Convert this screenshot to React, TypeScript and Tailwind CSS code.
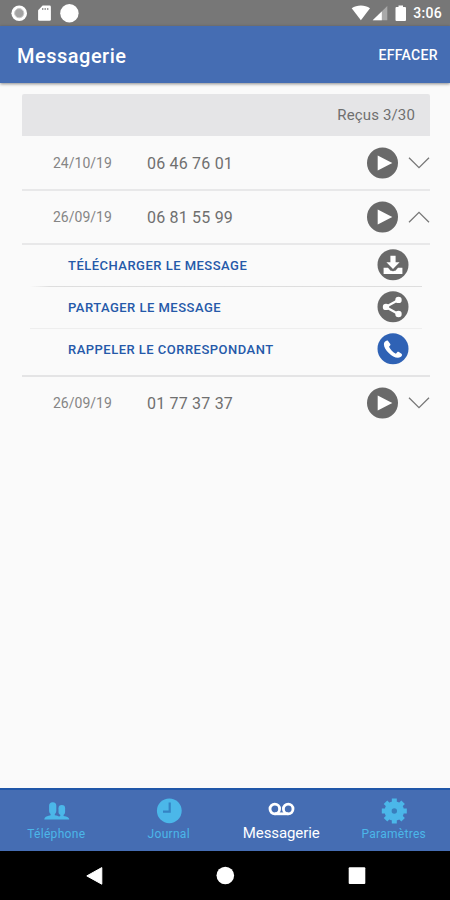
import React, { useState } from "react";

type Message = {
    id: number,
    date: string,
    phone: string,
}

const messages: Message[] = [
    {id: 1, date: "24/10/19", phone: "06 46 76 01"},
    {id: 2, date: "26/09/19", phone: "06 81 55 99"},
    {id: 3, date: "26/09/19", phone: "01 77 37 37"},
]

function StatusBar(){
    return(
        <div className="h-[26px] shrink-0 bg-[#777777]">
            <svg className="block" width="450" height="26" viewBox="0 0 450 26">
                <circle cx="19.2" cy="13.2" r="7.8" fill="#fff"/>
                <circle cx="19.2" cy="13.2" r="4.6" fill="#a3a3a3" stroke="#c9c9c9"/>
                <path d="M42.6 5.5h6.9a1.4 1.4 0 0 1 1.4 1.4v12.5a1.4 1.4 0 0 1-1.4 1.4h-10a1.4 1.4 0 0 1-1.4-1.4v-9.2z" fill="#fff"/>
                <path d="M42.7 8v2M45.2 8v2M47.7 8v2" stroke="#9a9a9a" strokeWidth="1.4"/>
                <circle cx="69.4" cy="13.2" r="9.2" fill="#fff"/>
                <path d="M351.7 8.2C356.8 4.6 364.9 4.6 370 8.2L360.9 20.2z" fill="#fff"/>
                <path d="M387.3 6v14.3h-14.6z" fill="#a9a9a9"/>
                <path d="M381.8 11.4v8.9h-9.1z" fill="#fff"/>
                <path d="M398.5 5.5h4.5v1.4h2a1 1 0 0 1 1 1v12a1 1 0 0 1-1 1h-8.5a1 1 0 0 1-1-1v-12a1 1 0 0 1 1-1h2z" fill="#fff"/>
                <text x="413.2" y="18.4" fill="#fff" fontSize="14" fontWeight="500" textLength="28.5">3:06</text>
            </svg>
        </div>
    )
}

function PlayButton(){
    return(
        <button className="block">
            <svg className="block" width="32" height="32" viewBox="0 0 32 32">
                <circle cx="16.5" cy="16" r="15.5" fill="#696969"/>
                <path d="M11.7 8.4v15.2l14.6-7.6z" fill="#fff"/>
            </svg>
        </button>
    )
}

function Chevron({open}: {open: boolean}){
    return(
        <svg className="block" width="22" height="14" viewBox="0 0 22 14" fill="none" stroke="#777777" strokeWidth="1.3">
            <path d={open ? "M1 12.3l10-10 10 10" : "M1 1.7l10 10 10-10"}/>
        </svg>
    )
}

function DownloadIcon(){
    return(
        <svg className="block" width="32" height="32" viewBox="0 0 32 32">
            <circle cx="16" cy="15.7" r="15.5" fill="#696969"/>
            <path d="M13.4 6.7h5.2v6.5h4l-6.6 6.8-6.6-6.8h4z" fill="#fff"/>
            <path d="M6.6 18.7h4.4l2.6 3h4.8l2.6-3h4.4v6.3h-18.8z" fill="#fff"/>
            <path d="M9.3 15.9l6.7 5.9 6.7-5.9" fill="none" stroke="#696969" strokeWidth="1.1"/>
        </svg>
    )
}

function ShareIcon(){
    return(
        <svg className="block" width="32" height="32" viewBox="0 0 32 32">
            <circle cx="16" cy="15.7" r="15.5" fill="#696969"/>
            <path d="M21.3 8.9l-12.6 7 12.6 7.2" fill="none" stroke="#fff" strokeWidth="2.3"/>
            <circle cx="21.5" cy="8.9" r="3.2" fill="#fff"/>
            <circle cx="9" cy="15.9" r="3.2" fill="#fff"/>
            <circle cx="21.5" cy="23" r="3.2" fill="#fff"/>
        </svg>
    )
}

function CallIcon(){
    return(
        <svg className="block" width="32" height="32" viewBox="0 0 32 32">
            <circle cx="16" cy="15.7" r="15.5" fill="#2f62b5"/>
            <path d="M9.5 7.700c-1.5.5-2.6 1.8-2.6 3.5 0 5.6 8.4 13.4 14 13.6 1.8 0 3.8-1.1 4.1-2.5.1-.7 0-1.1-.5-1.5l-2.6-1.7c-.6-.4-1.2-.4-1.7.1l-1.3 1.5c-3-1.3-5.6-4-6.9-6.9l1.1-1.2c.4-.5.5-1 .2-1.5l-2.2-3c-.4-.5-1-.6-1.6-.4z" fill="#fff"/>
        </svg>
    )
}

function MessageRow({message, open, toggle}: {message: Message, open: boolean, toggle: () => void}){
    return(
        <div className="h-[52px] flex flex-row items-center text-[#6f6f6f]">
            <span className="ml-[31px] w-[94px] pt-px text-[14px] text-[#858585]">{message.date}</span>
            <span className="pt-px text-[16px] tracking-[0.2px]">{message.phone}</span>
            <div className="ml-auto flex flex-row items-center gap-[10px]">
                <PlayButton/>
                <button onClick={toggle}><Chevron open={open}/></button>
            </div>
        </div>
    )
}

function Action({label, icon}: {label: string, icon: React.ReactNode}){
    return(
        <div className="h-[41px] flex flex-row items-start justify-between pl-[46px] pr-[21px]">
            <span className="leading-[42px] text-[13px] tracking-[0.48px] font-medium text-[#2559a9]">{label}</span>
            <div className="pt-[4px]">{icon}</div>
        </div>
    )
}

function MessageActions(){
    return(
        <div className="h-[132px] border-b-2 border-[#e4e4e5]">
            <Action label="TÉLÉCHARGER LE MESSAGE" icon={<DownloadIcon/>}/>
            <div className="ml-[8px] mr-[8px] h-px bg-linear-to-r from-transparent from-0% via-[#dedede] via-5% to-[#dedede]"/>
            <Action label="PARTAGER LE MESSAGE" icon={<ShareIcon/>}/>
            <div className="ml-[8px] mr-[8px] h-px bg-[#eeeeee]"/>
            <Action label="RAPPELER LE CORRESPONDANT" icon={<CallIcon/>}/>
        </div>
    )
}

function Tab({label, active, icon}: {label: string, active?: boolean, icon: React.ReactNode}){
    return(
        <button className={active
            ? "flex flex-col items-center text-white text-[15px] tracking-[-0.1px]"
            : "flex flex-col items-center text-[#4bb7e9] text-[12px] tracking-[0.3px]"}>
            <svg className="block mt-[8px]" width="28" height="28" viewBox="0 0 28 28" fill="currentColor">{icon}</svg>
            <span className={active ? "leading-4 -mt-px" : "leading-4"}>{label}</span>
        </button>
    )
}

function TabBar(){
    return(
        <div className="h-[63px] shrink-0 grid grid-cols-4 bg-[#456db3] border-t-2 border-[#1f56a8]">
            <Tab label="Téléphone" icon={
                <g>
                    <rect x="7.1" y="4.3" width="7.2" height="12" rx="3.5"/>
                    <rect x="16.5" y="7" width="6.6" height="10" rx="3.2"/>
                    <path d="M2.3 21.5c0-2.2 2-3.3 6.3-4.2v-3h4.2v3c2 .4 3.3.7 4.3 1.3l1.2-.7v-2.4h3.3v2.4c3.7.6 5.7 1.6 5.7 3.6z"/>
                </g>
            }/>
            <Tab label="Journal" icon={
                <g>
                    <circle cx="14.3" cy="12.8" r="12.4"/>
                    <path d="M14.7 4.5v9.2h-6.7" fill="none" stroke="#3483c4" strokeWidth="2.2"/>
                </g>
            }/>
            <Tab label="Messagerie" active icon={
                <g fill="none" stroke="currentColor" strokeWidth="2.8">
                    <circle cx="7.8" cy="11" r="4.8"/>
                    <circle cx="21.2" cy="11" r="4.8"/>
                    <path d="M7.8 15.8h13.4"/>
                </g>
            }/>
            <Tab label="Paramètres" icon={
                <g>
                    <circle cx="14.3" cy="13" r="9.8"/>
                    <path d="M14.3 .5v25M1.8 13h25M5.5 4.2l17.6 17.6M23.1 4.2l-17.6 17.6" stroke="currentColor" strokeWidth="5"/>
                    <circle cx="14.3" cy="13" r="2.7" fill="#397fbd"/>
                </g>
            }/>
        </div>
    )
}

function SystemNav(){
    return(
        <div className="h-[49px] shrink-0 bg-black">
            <svg className="block" width="450" height="49" viewBox="0 0 450 49" fill="#fff">
                <path d="M101.8 16.6v16.6l-15-8.3z" stroke="#fff" strokeLinejoin="round"/>
                <circle cx="225.3" cy="24.5" r="8.8"/>
                <rect x="348.7" y="16.2" width="16.6" height="16.8" rx="1"/>
            </svg>
        </div>
    )
}

function App(){

    const [opened, setOpened] = useState<number>(2)

    return(
        <div className="w-[450px] h-[900px] flex flex-col overflow-hidden bg-[#fafafa] font-[Roboto,sans-serif]">
            <StatusBar/>
            <header className="h-[57px] shrink-0 flex flex-row items-center justify-between pl-[17px] pr-[12px] pt-[2px]
            bg-[#456db3] text-white shadow-[0_1px_3px_rgba(0,0,0,0.45)]">
                <h1 className="text-[20px] font-medium tracking-[0.5px]">Messagerie</h1>
                <button className="text-[14px] font-medium tracking-[0.35px]">EFFACER</button>
            </header>
            <main className="grow pt-[11px] pl-[22px] pr-[20px]">
                <div className="h-[42px] flex items-center justify-end rounded-t-[2px] bg-[#e5e5e7] pr-[15px] pt-px mb-px
                text-[15px] tracking-[0.15px] text-[#6f6f6f]">Reçus 3/30</div>
                {messages.map((message, index) => (
                    <div key={message.id}>
                        <MessageRow message={message} open={opened === message.id}
                            toggle={()=>setOpened(opened === message.id ? 0 : message.id)}/>
                        {index < messages.length - 1 && <div className="h-[2px] bg-[#e8e8e9]"/>}
                        {opened === message.id && <MessageActions/>}
                    </div>
                ))}
            </main>
            <TabBar/>
            <SystemNav/>
        </div>
    )
}

export default App;
